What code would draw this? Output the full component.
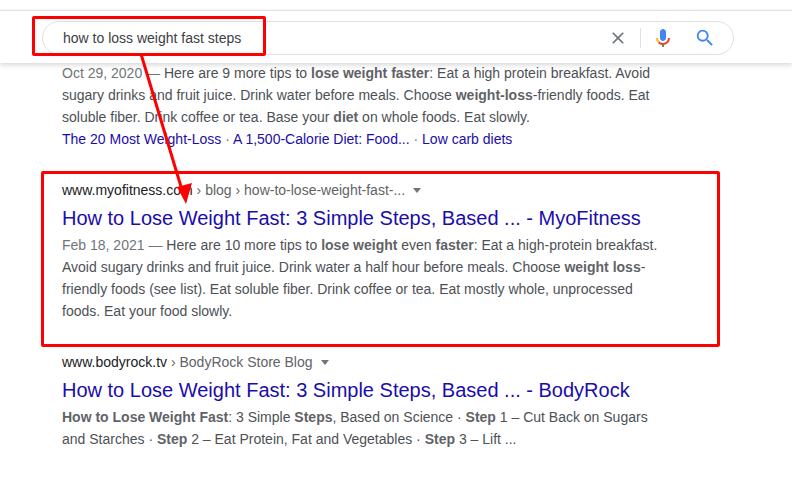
<script lang="ts">
    let results = [
        {
            site: "www.myofitness.com",
            path: " › blog › how-to-lose-weight-fast-...",
            title: "How to Lose Weight Fast: 3 Simple Steps, Based ... - MyoFitness",
        },
        {
            site: "www.bodyrock.tv",
            path: " › BodyRock Store Blog",
            title: "How to Lose Weight Fast: 3 Simple Steps, Based ... - BodyRock",
        },
    ];
</script>

<div class="page">
    <header class="topbar">
        <div class="searchbox">
            <span class="query">how to loss weight fast steps</span>
            <svg class="clear" viewBox="0 0 24 24" width="20" height="20">
                <path
                    fill="#70757a"
                    d="M19 6.41 17.59 5 12 10.59 6.41 5 5 6.41 10.59 12 5 17.59 6.41 19 12 13.41 17.59 19 19 17.59 13.41 12z"
                />
            </svg>
            <span class="divider"></span>
            <svg class="mic" viewBox="0 0 24 24" width="24" height="24">
                <path fill="#4285f4" d="M12 15c1.66 0 3-1.31 3-2.97V6c0-1.66-1.34-3-3-3S9 4.34 9 6v6.03C9 13.69 10.34 15 12 15z" />
                <path fill="#34a853" d="M11 18.08h2V21h-2z" />
                <path fill="#fbbc05" d="M7.05 16.87A6.98 6.98 0 0 1 5 12h2c0 1.3.5 2.5 1.46 3.46z" />
                <path fill="#ea4335" d="M12 17v2.08c-1.9 0-3.65-.8-4.95-2.2l1.41-1.42A5 5 0 0 0 12 17zM17 12h2a7 7 0 0 1-7 7.08V17a5 5 0 0 0 5-5z" />
            </svg>
            <svg class="glass" viewBox="0 0 24 24" width="24" height="24">
                <path
                    fill="#4285f4"
                    d="M15.5 14h-.79l-.28-.27A6.47 6.47 0 0 0 16 9.5 6.5 6.5 0 1 0 9.5 16c1.61 0 3.09-.59 4.23-1.57l.27.28v.79l5 4.99L20.49 19l-4.99-5zm-6 0C7.01 14 5 11.99 5 9.5S7.01 5 9.5 5 14 7.01 14 9.5 11.99 14 9.5 14z"
                />
            </svg>
        </div>
    </header>

    <main class="results">
        <section class="first">
            <p class="snippet">
                <span class="date">Oct 29, 2020 —</span> Here are 9 more tips to <b>lose weight faster</b>: Eat a high protein breakfast. Avoid sugary drinks and fruit juice. Drink water before meals. Choose <b>weight-loss</b>-friendly foods. Eat soluble fiber. Drink coffee or tea. Base your <b>diet</b> on whole foods. Eat slowly.
            </p>
            <div class="sitelinks">
                <a href="#top">The 20 Most Weight-Loss</a>
                <span class="sep">·</span>
                <a href="#top">A 1,500-Calorie Diet: Food...</a>
                <span class="sep">·</span>
                <a href="#top">Low carb diets</a>
            </div>
        </section>

        <section class="second">
            <div class="crumb">
                <span class="site">{results[0].site}</span>{results[0].path}<span class="caret"></span>
            </div>
            <a class="title" href="#top">{results[0].title}</a>
            <p class="snippet">
                <span class="date">Feb 18, 2021 —</span> Here are 10 more tips to <b>lose weight</b> even <b>faster</b>: Eat a high-protein breakfast. Avoid sugary drinks and fruit juice. Drink water a half hour before meals. Choose <b>weight loss</b>-friendly foods (see list). Eat soluble fiber. Drink coffee or tea. Eat mostly whole, unprocessed foods. Eat your food slowly.
            </p>
        </section>

        <section class="third">
            <div class="crumb">
                <span class="site">{results[1].site}</span>{results[1].path}<span class="caret"></span>
            </div>
            <a class="title" href="#top">{results[1].title}</a>
            <p class="snippet">
                <b>How to Lose Weight Fast</b>: 3 Simple <b>Steps</b>, Based on Science · <b>Step</b> 1 – Cut Back on Sugars and Starches · <b>Step</b> 2 – Eat Protein, Fat and Vegetables · <b>Step</b> 3 – Lift ...
            </p>
        </section>
    </main>

    <!-- annotations drawn over the screenshot -->
    <div class="mark mark-search"></div>
    <div class="mark mark-result"></div>
    <svg class="arrow" width="792" height="484" viewBox="0 0 792 484">
        <path d="M141 54 L182 190" stroke="#f00" stroke-width="3" fill="none" />
        <path d="M186 204 L177 187 L192 183 z" fill="#f00" />
    </svg>
</div>

<style>
    :global(body) {
        margin: 0;
        background: #fff;
    }

    .page {
        position: relative;
        width: 792px;
        height: 484px;
        overflow: hidden;
        font-family: "Liberation Sans", Arial, sans-serif;
        font-size: 14px;
        color: #4d5156;
    }

    .topbar {
        position: relative;
        z-index: 1;
        box-sizing: border-box;
        height: 53px;
        margin-top: 10px;
        padding: 10px 0 0 42px;
        background: #fff;
        border-top: 1px solid #dfe1e5;
        box-shadow: 0 2px 5px rgb(0 0 0 / 0.16);
    }

    .searchbox {
        box-sizing: border-box;
        display: flex;
        align-items: center;
        width: 692px;
        height: 34px;
        padding-left: 20px;
        border: 1px solid #dfe1e5;
        border-radius: 17px;
    }

    .query {
        flex: 1;
        color: #3c4043;
        font-size: 14px;
    }

    .clear {
        margin-right: 12px;
    }

    .divider {
        width: 1px;
        height: 20px;
        background: #dfe1e5;
        margin-right: 10px;
    }

    .mic {
        margin-right: 19px;
    }

    .glass {
        margin-right: 17px;
        width: 22px;
        height: 22px;
    }

    .results {
        padding-left: 62px;
    }

    .first {
        margin-top: -1px;
    }

    .second {
        margin-top: 30px;
    }

    .third {
        margin-top: 30px;
    }

    .snippet {
        margin: 0;
        width: 600px;
        line-height: 22px;
    }

    .date {
        color: #70757a;
    }

    .snippet b {
        color: #5f6368;
    }

    .sitelinks {
        line-height: 22px;
    }

    .sitelinks a {
        color: #1a0dab;
        text-decoration: none;
    }

    .sep {
        color: #70757a;
    }

    .crumb {
        line-height: 20px;
        color: #5f6368;
    }

    .site {
        color: #202124;
    }

    .caret {
        display: inline-block;
        margin-left: 8px;
        vertical-align: 2px;
        border: 4px solid transparent;
        border-top: 5px solid #70757a;
        border-bottom-width: 0;
    }

    .title {
        display: block;
        margin-top: 5px;
        color: #1a0dab;
        font-size: 20px;
        line-height: 26px;
        text-decoration: none;
    }

    .title + .snippet {
        margin-top: 3px;
    }

    .mark {
        position: absolute;
        z-index: 2;
        box-sizing: border-box;
        border: 3px solid #f00;
        border-radius: 2px;
    }

    .mark-search {
        left: 32px;
        top: 16px;
        width: 234px;
        height: 40px;
    }

    .mark-result {
        left: 41px;
        top: 171px;
        width: 679px;
        height: 176px;
    }

    .arrow {
        position: absolute;
        left: 0;
        top: 0;
        z-index: 3;
    }
</style>
